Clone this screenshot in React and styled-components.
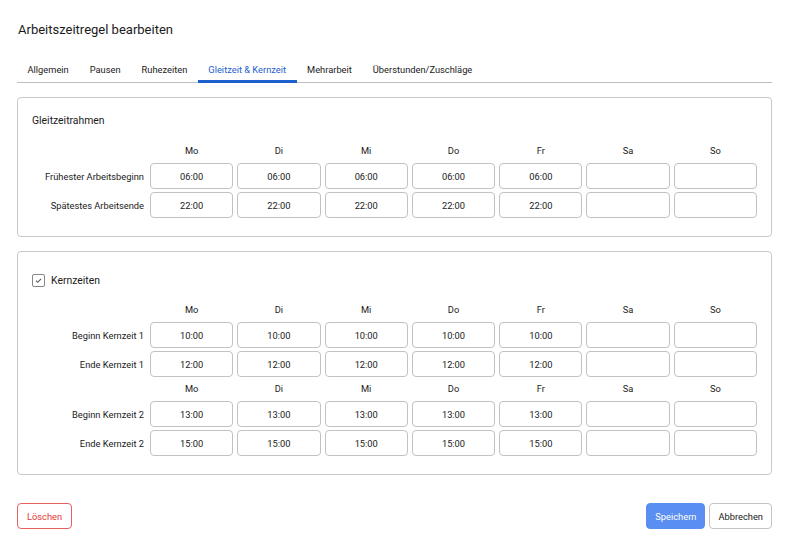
import React, { useState } from 'react';
import styled, { createGlobalStyle } from 'styled-components';

const GlobalStyle = createGlobalStyle`
  body {
    margin: 0;
    background: #fff;
    font-family: Roboto, "Liberation Sans", Arial, sans-serif;
    color: #1a1a1a;
  }
`;

const DAYS = ['Mo', 'Di', 'Mi', 'Do', 'Fr', 'Sa', 'So'];
const TABS = ['Allgemein', 'Pausen', 'Ruhezeiten', 'Gleitzeit & Kernzeit', 'Mehrarbeit', 'Überstunden/Zuschläge'];

const week = (t) => [t, t, t, t, t, '', ''];

const TimeGrid = ({ rows }) => (
    <Grid>
        {rows.map((row, i) =>
            row.header ? (
                <React.Fragment key={i}>
                    <span />
                    {DAYS.map((d) => <DayHead key={d}>{d}</DayHead>)}
                </React.Fragment>
            ) : (
                <React.Fragment key={i}>
                    <RowLabel>{row.label}</RowLabel>
                    {row.values.map((v, j) => (
                        <TimeInput key={j} defaultValue={v} />
                    ))}
                </React.Fragment>
            )
        )}
    </Grid>
);

const App = () => {
    const [tab, setTab] = useState(3);
    const [core, setCore] = useState(true);

    return (
        <Page>
            <GlobalStyle />
            <Title>Arbeitszeitregel bearbeiten</Title>
            <TabBar>
                {TABS.map((t, i) => (
                    <Tab key={t} $active={i === tab} onClick={() => setTab(i)}>{t}</Tab>
                ))}
            </TabBar>

            <Panel>
                <PanelTitle>Gleitzeitrahmen</PanelTitle>
                <TimeGrid rows={[
                    { header: true },
                    { label: 'Frühester Arbeitsbeginn', values: week('06:00') },
                    { label: 'Spätestes Arbeitsende', values: week('22:00') },
                ]} />
            </Panel>

            <Panel>
                <CheckRow onClick={() => setCore(!core)}>
                    <Check>
                        {core && (
                            <svg width="9" height="9" viewBox="0 0 10 10">
                                <path d="M2.2 5.2 L4.2 7 L7.8 3.2" fill="none" stroke="#555" strokeWidth="1.2" />
                            </svg>
                        )}
                    </Check>
                    <span>Kernzeiten</span>
                </CheckRow>
                <TimeGrid rows={[
                    { header: true },
                    { label: 'Beginn Kernzeit 1', values: week('10:00') },
                    { label: 'Ende Kernzeit 1', values: week('12:00') },
                    { header: true },
                    { label: 'Beginn Kernzeit 2', values: week('13:00') },
                    { label: 'Ende Kernzeit 2', values: week('15:00') },
                ]} />
            </Panel>

            <Footer>
                <Button $variant="danger">Löschen</Button>
                <Actions>
                    <Button $variant="primary">Speichern</Button>
                    <Button>Abbrechen</Button>
                </Actions>
            </Footer>
        </Page>
    );
};

export default App;

const Page = styled.div`
    width: 755px;
    padding: 20px 0 0 17px;
    box-sizing: content-box;
`;

const Title = styled.h1`
    margin: 0 0 0 1px;
    font-size: 13px;
    font-weight: 400;
    line-height: 20px;
    color: #1a1a1a;
`;

const TabBar = styled.div`
    display: flex;
    margin-top: 22px;
    border-bottom: 1px solid #bdbdbd;
`;

const Tab = styled.div`
    padding: 0 10.5px 2px;
    line-height: 16px;
    font-size: 9.3px;
    color: ${p => p.$active ? '#1e5fce' : '#1a1a1a'};
    border-bottom: 3px solid ${p => p.$active ? '#1e5fce' : 'transparent'};
    margin-bottom: -1px;
    cursor: pointer;
`;

const Panel = styled.section`
    margin-top: 14px;
    border: 1px solid #c9c9c9;
    border-radius: 4px;
    padding: 15px 14px 18px 14px;
`;

const PanelTitle = styled.div`
    font-size: 10.4px;
    line-height: 16px;
    margin-bottom: 13px;
`;

const CheckRow = styled.div`
    display: flex;
    align-items: center;
    gap: 6px;
    height: 24px;
    margin: 1px 0 9px;
    font-size: 10.4px;
    cursor: pointer;
`;

const Check = styled.span`
    width: 11px;
    height: 11px;
    border: 1px solid #858585;
    border-radius: 2px;
    display: flex;
    align-items: center;
    justify-content: center;
`;

const Grid = styled.div`
    display: grid;
    grid-template-columns: 114px repeat(7, 1fr);
    column-gap: 4px;
    row-gap: 3px;
`;

const DayHead = styled.div`
    font-size: 9.3px;
    text-align: center;
    line-height: 18px;
    height: 18px;
`;

const RowLabel = styled.div`
    font-size: 9.3px;
    text-align: right;
    align-self: center;
    padding-right: 2px;
    white-space: nowrap;
`;

const TimeInput = styled.input`
    height: 26px;
    box-sizing: border-box;
    min-width: 0;
    border: 1px solid #c2c2c2;
    border-radius: 4px;
    text-align: center;
    font-family: inherit;
    font-size: 9.3px;
    color: #1a1a1a;
    padding: 0;
    outline: none;
`;

const Footer = styled.div`
    display: flex;
    justify-content: space-between;
    margin-top: 28px;
`;

const Actions = styled.div`
    display: flex;
    gap: 4px;
`;

const Button = styled.button`
    height: 26px;
    padding: 0 ${p => p.$variant === 'danger' ? '9px' : '8px'};
    border-radius: 4px;
    font-family: inherit;
    font-size: 9.3px;
    cursor: pointer;
    background: ${p => p.$variant === 'primary' ? '#5a8ef0' : '#fff'};
    color: ${p => p.$variant === 'primary' ? '#fff' : p.$variant === 'danger' ? '#e53935' : '#1a1a1a'};
    border: 1px solid ${p => p.$variant === 'primary' ? '#5a8ef0' : p.$variant === 'danger' ? '#e86060' : '#c4c4c4'};
`;
